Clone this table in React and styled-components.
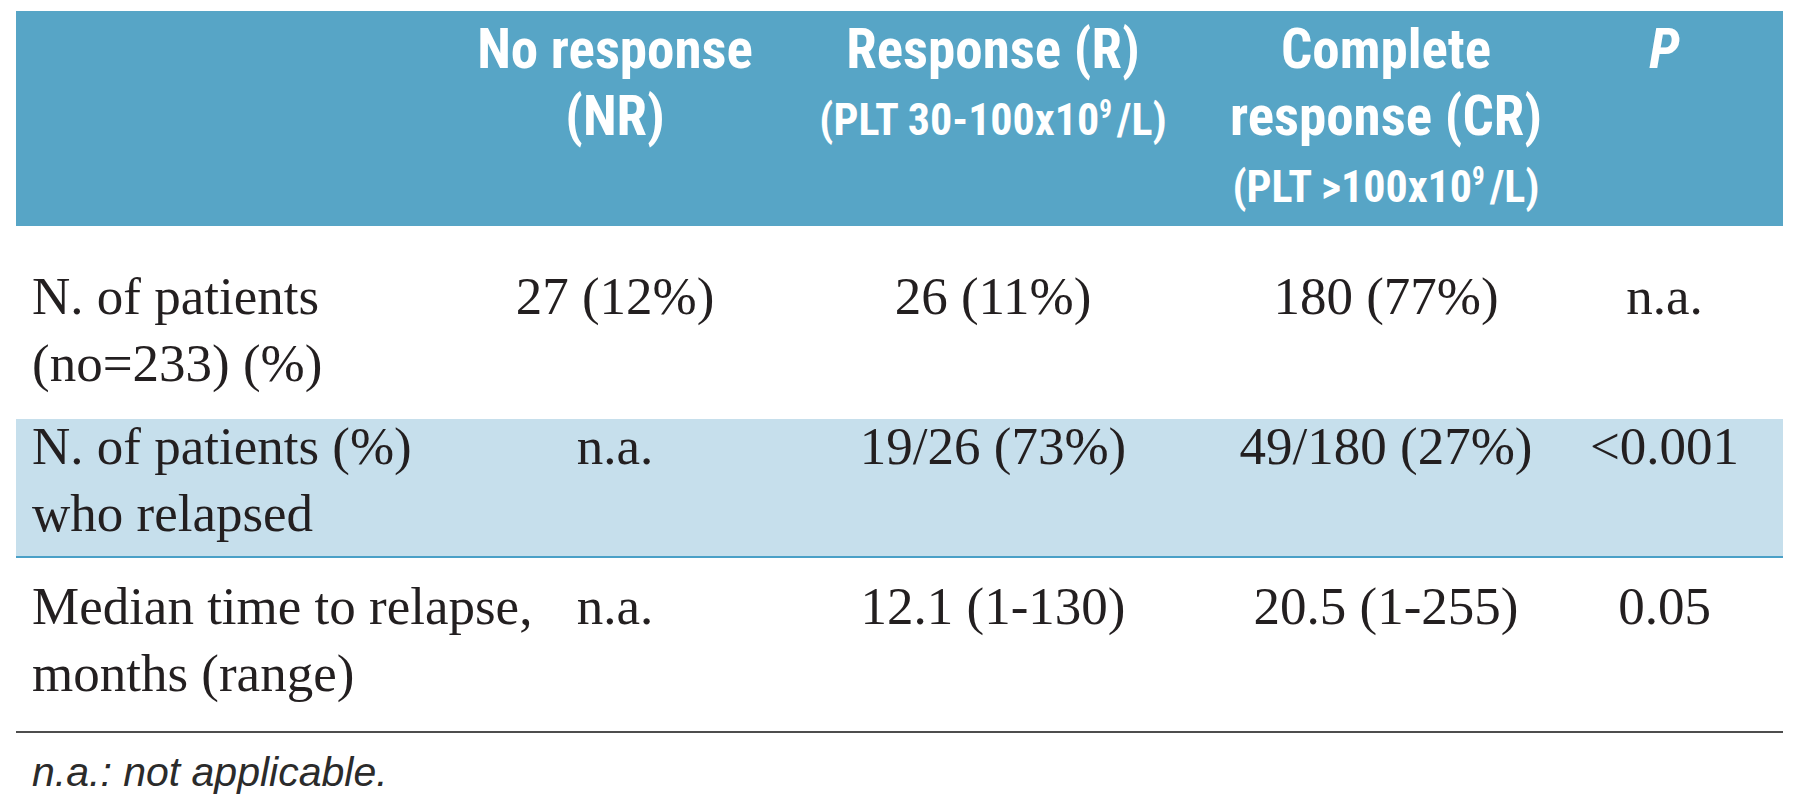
import React from "react";
import styled, { createGlobalStyle } from "styled-components";

const COLUMNS = "454px 290px 466px 320px 237px";

const GlobalStyle = createGlobalStyle`
  html, body {
    margin: 0;
    padding: 0;
    background: #fff;
  }
`;

const Page = styled.div`
  width: 1767px;
  padding: 11px 17px 0 16px;
`;

const Row = styled.div`
  display: grid;
  grid-template-columns: ${COLUMNS};
  padding: ${(p) => p.$pad || "0"};
  background: ${(p) => (p.$band ? "#c6dfec" : "transparent")};
  border-bottom: ${(p) => p.$border || "none"};
`;

const HeaderRow = styled(Row)`
  background: #57a5c6;
  padding: 5px 0 5px;
`;

const HeadCell = styled.div`
  font-family: "Roboto Condensed", "Roboto", "Liberation Sans", sans-serif;
  font-stretch: condensed;
  font-weight: 700;
  font-style: ${(p) => (p.$italic ? "italic" : "normal")};
  font-size: 55px;
  line-height: 67px;
  color: #fff;
  text-align: center;
  white-space: nowrap;
`;

const Sub = styled.span`
  font-size: 44px;
`;

const Sup = styled.sup`
  font-size: 25px;
  line-height: 0;
  vertical-align: 17px;
  margin-right: 5px;
`;

const Cell = styled.div`
  font-family: "Liberation Serif", "Times New Roman", serif;
  font-size: 53px;
  line-height: 67px;
  color: #231f20;
  white-space: nowrap;
  text-align: ${(p) => (p.$label ? "left" : "center")};
  padding-left: ${(p) => (p.$label ? "16px" : "0")};
  margin-top: ${(p) => p.$shift || 0}px;
`;

const Footnote = styled.p`
  margin: 15px 0 0 16px;
  font-family: "Liberation Sans", Arial, sans-serif;
  font-style: italic;
  font-size: 41px;
  line-height: 48px;
  color: #2b2b2b;
`;

const rows = [
  {
    label: ["N. of patients", "(no=233) (%)"],
    values: ["27 (12%)", "26 (11%)", "180 (77%)", "n.a."],
    pad: "37px 0 22px",
  },
  {
    label: ["N. of patients (%)", "who relapsed"],
    values: ["n.a.", "19/26 (73%)", "49/180 (27%)", "<0.001"],
    pad: "0 0 9px",
    band: true,
    shift: -6,
    border: "2px solid #4aa0c7",
  },
  {
    label: ["Median time to relapse,", "months (range)"],
    values: ["n.a.", "12.1 (1-130)", "20.5 (1-255)", "0.05"],
    pad: "15px 0 24px",
    border: "2px solid #4d4d4d",
  },
];

export default function App() {
  return (
    <Page>
      <GlobalStyle />
      <HeaderRow>
        <HeadCell />
        <HeadCell>
          No response
          <br />
          (NR)
        </HeadCell>
        <HeadCell>
          Response (R)
          <br />
          <Sub>
            (PLT 30-100x10<Sup>9</Sup>/L)
          </Sub>
        </HeadCell>
        <HeadCell>
          Complete
          <br />
          response (CR)
          <br />
          <Sub>
            (PLT &gt;100x10<Sup>9</Sup>/L)
          </Sub>
        </HeadCell>
        <HeadCell $italic>P</HeadCell>
      </HeaderRow>
      {rows.map((row) => (
        <Row key={row.label[0]} $pad={row.pad} $band={row.band} $border={row.border}>
          <Cell $label $shift={row.shift}>
            {row.label[0]}
            <br />
            {row.label[1]}
          </Cell>
          {row.values.map((v, i) => (
            <Cell key={i} $shift={row.shift}>
              {v}
            </Cell>
          ))}
        </Row>
      ))}
      <Footnote>n.a.: not applicable.</Footnote>
    </Page>
  );
}
